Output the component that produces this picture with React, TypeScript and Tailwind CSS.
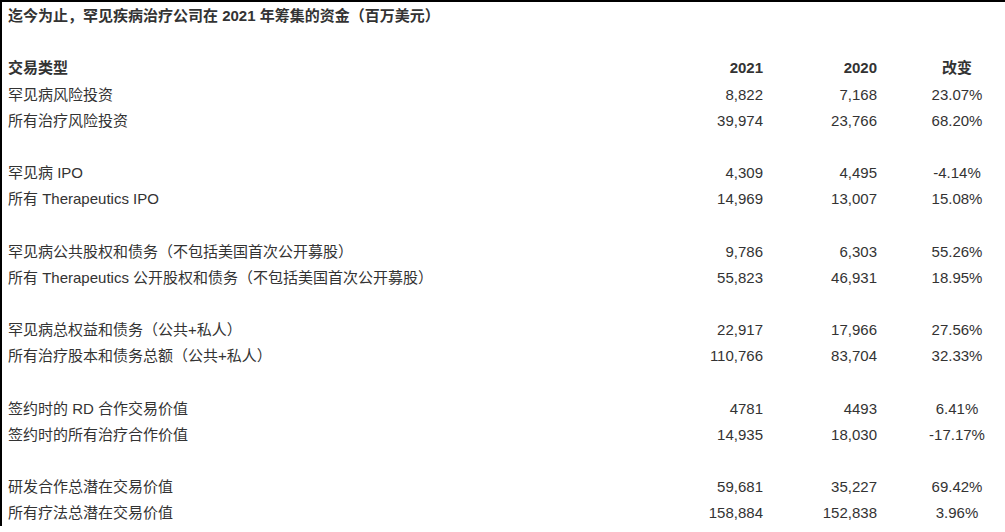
const rows: (string[] | null)[] = [
  ["罕见病风险投资", "8,822", "7,168", "23.07%"],
  ["所有治疗风险投资", "39,974", "23,766", "68.20%"],
  null,
  ["罕见病 IPO", "4,309", "4,495", "-4.14%"],
  ["所有 Therapeutics IPO", "14,969", "13,007", "15.08%"],
  null,
  ["罕见病公共股权和债务（不包括美国首次公开募股）", "9,786", "6,303", "55.26%"],
  ["所有 Therapeutics 公开股权和债务（不包括美国首次公开募股）", "55,823", "46,931", "18.95%"],
  null,
  ["罕见病总权益和债务（公共+私人）", "22,917", "17,966", "27.56%"],
  ["所有治疗股本和债务总额（公共+私人）", "110,766", "83,704", "32.33%"],
  null,
  ["签约时的 RD 合作交易价值", "4781", "4493", "6.41%"],
  ["签约时的所有治疗合作价值", "14,935", "18,030", "-17.17%"],
  null,
  ["研发合作总潜在交易价值", "59,681", "35,227", "69.42%"],
  ["所有疗法总潜在交易价值", "158,884", "152,838", "3.96%"],
];

const rowCls =
  "grid grid-cols-[1fr_100px_114px_40px_80px] items-center h-[26.18px] pl-[6px] pr-[8px] whitespace-nowrap";

function Row({ cells, bold }: { cells: string[]; bold?: boolean }) {
  return (
    <div className={`${rowCls} ${bold ? "font-bold" : ""}`}>
      <div>{cells[0]}</div>
      <div className="text-right">{cells[1]}</div>
      <div className="text-right">{cells[2]}</div>
      <div />
      <div className="text-center">{cells[3]}</div>
    </div>
  );
}

export default function App() {
  return (
    <div className="w-[1005px] h-[532px] overflow-hidden bg-white">
      <div
        className="border-t-2 border-l-2 border-black pt-px text-[15px] leading-[20px] text-[#333333]"
        style={{ fontFamily: '"Liberation Sans", "Noto Sans CJK SC", sans-serif' }}
      >
        <div className="flex items-center h-[26.18px] pl-[6px] font-bold whitespace-nowrap">
          迄今为止，罕见疾病治疗公司在 2021 年筹集的资金（百万美元）
        </div>
        <div className="h-[26.18px]" />
        <Row cells={["交易类型", "2021", "2020", "改变"]} bold />
        {rows.map((r, i) =>
          r ? <Row key={i} cells={r} /> : <div key={i} className="h-[26.18px]" />
        )}
      </div>
    </div>
  );
}
